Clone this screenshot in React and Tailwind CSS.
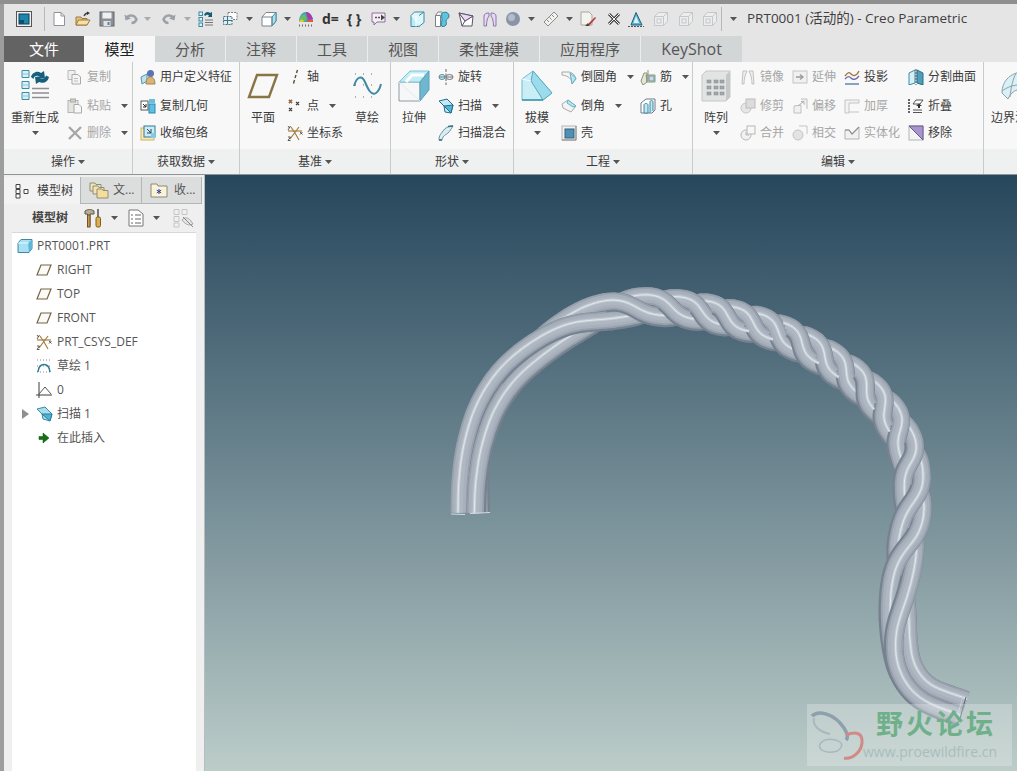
import { useMemo } from 'react';

const FONT = "font-['Open_Sans','Noto_Sans_CJK_SC',sans-serif]";

const S = ({ w = 16, h = 16, className = '', children }) => (
  <svg width={w} height={h} viewBox={`0 0 ${w} ${h}`} fill="none" className={`shrink-0 ${className}`}>
    {children}
  </svg>
);

const Caret = ({ className = '' }) => (
  <svg width="7" height="4" viewBox="0 0 7 4" className={`shrink-0 ${className}`}>
    <path d="M0 0h7L3.5 4z" fill="#555" />
  </svg>
);

/* quick access bar */
const AppIco = (p) => (
  <S {...p}>
    <rect x=".5" y=".5" width="15" height="15" fill="#eef1f3" stroke="#555" />
    <rect x="3" y="3" width="10" height="10" fill="#1c86ad" stroke="#123f55" />
    <rect x="3" y="9" width="5" height="4" fill="#0f4f6b" />
  </S>
);
const NewIco = (p) => (
  <S {...p}>
    <path d="M3 1.500h7l3.500 3.500v9.500H3z" fill="#fff" stroke="#8e9499" />
    <path d="M10 1.500V5h3.500" stroke="#8e9499" />
  </S>
);
const OpenIco = (p) => (
  <S {...p}>
    <path d="M1 14V6h5l1 1.500h5V14z" fill="#e6c27c" stroke="#9a7a3d" />
    <path d="M1 14l2.500-5H15l-3 5z" fill="#f6dfa8" stroke="#9a7a3d" />
    <path d="M9 5c1-2 2-3 4-3" stroke="#444" strokeWidth="1.500" />
    <path d="M12 .5l3 1.500-3 2z" fill="#333" />
  </S>
);
const SaveIco = (p) => (
  <S {...p}>
    <rect x="1" y="1" width="14" height="14" fill="#8c9096" stroke="#63676c" />
    <rect x="3.500" y="1.500" width="9" height="6" fill="#eef0f2" />
    <rect x="4.500" y="10" width="7" height="5" fill="#dfe4e8" />
    <rect x="8.500" y="11" width="2" height="3" fill="#5f7f96" />
  </S>
);
const UndoIco = (p) => (
  <S {...p}>
    <path d="M4 6c3-2.500 8-2 9.500 2.500-1 2.500-3 3.500-5 3.500" stroke="#9ba1a6" strokeWidth="2.400" />
    <path d="M1.500 3.500l1 6 5.500-2z" fill="#9ba1a6" />
  </S>
);
const RedoIco = (p) => (
  <S {...p} className={`-scale-x-100 ${p.className || ''}`}>
    <path d="M4 6c3-2.500 8-2 9.500 2.500-1 2.500-3 3.500-5 3.500" stroke="#9ba1a6" strokeWidth="2.400" />
    <path d="M1.500 3.500l1 6 5.500-2z" fill="#9ba1a6" />
  </S>
);
const RegenSm = (p) => (
  <S {...p}>
    <rect x="1" y="1" width="3.500" height="3.500" fill="#d5f0f7" stroke="#3e8aa3" />
    <rect x="1" y="6.500" width="3.500" height="3.500" fill="#d5f0f7" stroke="#3e8aa3" />
    <rect x="1" y="12" width="3.500" height="3.500" fill="#d5f0f7" stroke="#3e8aa3" />
    <path d="M6 4c1-3 4-4 6-2l2-1v5h-4l1-1.500C10 3.500 8 3.500 7.500 5z" fill="#175a75" />
    <path d="M7 9h8M7 11.500h8M7 14h8" stroke="#777" />
  </S>
);
const WinIco = (p) => (
  <S {...p}>
    <path d="M6 1.500h9v7H6z" fill="#fff" stroke="#7b8186" strokeDasharray="2 1" />
    <path d="M1.500 5.500H10v8H1.500z" fill="#d8f0f6" stroke="#4d6d7a" strokeDasharray="2 1" />
    <path d="M1.500 9.500H10M5.500 5.500v8" stroke="#4d6d7a" />
  </S>
);
const CubeIco = (p) => (
  <S {...p}>
    <path d="M1 6l4-4.500h10V10l-4 5H1z" fill="#fff" stroke="#79858c" />
    <path d="M11 6l4-4.500V10l-4 5z" fill="#a9e2f1" stroke="#3e8aa3" />
    <path d="M1 6h10v9" stroke="#79858c" />
  </S>
);
const ColorIco = (p) => (
  <S {...p}>
    <path d="M1 11c0-6 3-10 7-10s7 4 7 10z" fill="#3e9ad6" />
    <path d="M8 1c3 0 5 2 7 7l-5 1z" fill="#b03aa0" />
    <path d="M2 9c0-3 2-6 5-6l2 5-3 3z" fill="#65c05a" />
    <path d="M1 11c1-3 3-3 5-1l-1 1z" fill="#f1c231" />
    <path d="M9 9l6 0v2H9z" fill="#e3582f" />
    <path d="M1 14.500h14" stroke="#6d6d6d" strokeDasharray="1 2" strokeWidth="2" />
  </S>
);
const BubbleIco = (p) => (
  <S {...p}>
    <path d="M1 2h13v9H6l-3 3v-3H1z" fill="#f5eef7" stroke="#8e6e96" />
    <path d="M4 6.500h2M7 6.500h2" stroke="#555" strokeWidth="1.500" />
    <path d="M10 3.500l4 3-4 3z" fill="#444" />
  </S>
);
const BoxIco = (p) => (
  <S {...p}>
    <path d="M2 4.500h8v11H2z" fill="#b9ecf6" stroke="#3e8aa3" />
    <path d="M2 4.500L5.500 1H15v10.500l-5 4" fill="#dff6fb" stroke="#3e8aa3" />
    <path d="M10 4.500L15 1" stroke="#3e8aa3" />
    <path d="M7 4.500v11" stroke="#fff" />
  </S>
);
const SweepBoxIco = (p) => (
  <S {...p}>
    <path d="M1.500 4.500h5v11h-5zM1.500 4.500L4 1h4" fill="#fff" stroke="#7b8186" />
    <path d="M8 2c4-2 7 0 7 3s-3 3-3 5 1 2 0 4-5 2-5 0 1-3 1-5-1-5 0-7z" fill="#5ec3dc" stroke="#2f7d96" />
  </S>
);
const FoldIco = (p) => (
  <S {...p}>
    <path d="M1 2l14 3-1 10H4z" fill="#fff" stroke="#5b5468" />
    <path d="M1 2l6 8-3 5" stroke="#5b5468" />
    <path d="M7 10l8-5" stroke="#5b5468" />
    <path d="M1 2l6 8 8-5z" fill="#ead9f0" stroke="#5b5468" />
  </S>
);
const MirrorTop = (p) => (
  <S {...p}>
    <path d="M7 2C4 2 2 3 2 5v10h2.500c0-5 1-8 2.500-10zM9 2c3 0 5 1 5 3v10h-2.500c0-5-1-8-2.500-10z" fill="#e6d9f2" stroke="#8b76a8" />
  </S>
);
const SphereIco = (p) => (
  <S {...p}>
    <circle cx="8" cy="8" r="7" fill="#8a94a8" />
    <circle cx="6.500" cy="6.500" r="3.500" fill="#b4bcc9" />
  </S>
);
const RulerIco = (p) => (
  <S {...p}>
    <path d="M1 11L11 1l4 4L5 15z" fill="#f3f1ec" stroke="#8c8c8c" />
    <path d="M4 9l2 2M6.500 6.500l2 2M9 4l2 2" stroke="#8c8c8c" />
  </S>
);
const PageBrushIco = (p) => (
  <S {...p}>
    <path d="M1 1h8l3 3v10H1z" fill="#f3f3ef" stroke="#a8a8a0" />
    <path d="M7 14l8-8 1 1-7 8z" fill="#b83a3a" />
    <path d="M5 15l3-3 1 3z" fill="#444" />
  </S>
);
const XIco = (p) => (
  <S {...p}>
    <path d="M3 3l10 10M13 3L3 13" stroke="#444" strokeWidth="3" />
    <path d="M3 3l10 10M13 3L3 13" stroke="#f4f4f4" strokeWidth="1" />
  </S>
);
const SheetIco = (p) => (
  <S {...p}>
    <path d="M8 1.500L3 14h11z" fill="#5fb4d4" stroke="#1f5f7a" />
    <path d="M8 5l-2.500 7H11z" fill="#dcf2f9" />
    <path d="M0 15.500h16" stroke="#555" strokeDasharray="2 1" />
  </S>
);
const GhostIco = (p) => (
  <S {...p}>
    <path d="M1.500 5.500l4-4h9v9l-4 4h-9z" fill="#eceeee" stroke="#c5c8ca" />
    <path d="M1.500 5.500h9v9M10.500 5.500l4-4" stroke="#c5c8ca" />
    <rect x="4" y="8" width="4" height="4" stroke="#c5c8ca" />
  </S>
);

/* ribbon: operations */
const RegenBig = () => (
  <S w={32} h={34}>
    <path d="M3 1.500h7v7H3zM3 12.500h7v7H3zM3 23.500h7v7H3z" fill="#d5f0f7" stroke="#3e8aa3" />
    <path d="M3 5h7M3 16h7M3 27h7" stroke="#89c8da" />
    <path d="M12 8c1-4 6-7 10-4l3-2 1 7-7 1 2-2.500C18 6 15 7 14.500 10z" fill="#17607d" />
    <path d="M30 8c-1 5-6 7-10 5l-3 2-1-7 7-1-2 2.500c3 1 5.500-.5 6-3z" fill="#17607d" />
    <path d="M13 19.500h17M13 24h17M13 28.500h17" stroke="#8f8f8f" strokeWidth="1.500" />
  </S>
);
const CopyIco = () => (
  <S>
    <path d="M1 1.500h7v9H1z" fill="#efefef" stroke="#b9b9b9" />
    <path d="M5 5.500h6l2.500 2.500v7H5z" fill="#f5f5f5" stroke="#a9a9a9" />
    <path d="M7 9.500h4M7 12h4" stroke="#bcbcbc" />
  </S>
);
const PasteIco = () => (
  <S>
    <rect x="1" y="2.500" width="10" height="12" fill="#e4e4e0" stroke="#b4b4b0" />
    <rect x="3.500" y="1" width="5" height="3" fill="#cfcfcb" stroke="#aaa" />
    <path d="M7 6.500h5l2.500 2.500v6H7z" fill="#f7f7f7" stroke="#a9a9a9" />
  </S>
);
const DeleteIco = () => (
  <S>
    <path d="M2 2l12 12M14 2L2 14" stroke="#a7a7a7" strokeWidth="2.400" />
  </S>
);
const UdfIco = () => (
  <S>
    <path d="M1 8l6-3v7l-5 3z" fill="#b9e5f2" stroke="#5d93a8" />
    <circle cx="10.500" cy="4.500" r="3.500" fill="#5b72b8" />
    <path d="M6 15c0-5 2-7 4.500-7s4.500 2 4.500 7z" fill="#d8b576" stroke="#a5854a" />
  </S>
);
const CopyGeomIco = () => (
  <S>
    <rect x="1" y="3" width="7" height="9" fill="#fff" stroke="#555" />
    <path d="M3 6l3 3M6 6v3H3" stroke="#222" />
    <rect x="9" y="1" width="6" height="4" fill="#64bfe0" />
    <rect x="9" y="6" width="6" height="9" fill="#5bc0e4" stroke="#2f86a8" />
  </S>
);
const WrapIco = () => (
  <S>
    <rect x="1" y="3" width="13" height="12" fill="#fbe9b5" stroke="#d1b25e" />
    <rect x="4" y="1" width="11" height="11" fill="#cfeaf3" stroke="#2e7c9c" />
    <path d="M7 4l4 4M11 4v4H7" stroke="#1a4a60" />
    <rect x="11" y="8" width="4" height="5" fill="#7ecde6" />
  </S>
);

/* ribbon: datums */
const PlaneBig = () => (
  <S w={32} h={26}>
    <path d="M10 2h20l-8 22H2z" stroke="#8a7345" strokeWidth="2.400" />
  </S>
);
const AxisIco = () => (
  <S>
    <path d="M10.500 1l-1 3M9 6L8 9M7.500 11l-1 3.500" stroke="#5f4f2f" strokeWidth="1.400" />
  </S>
);
const PointIco = () => (
  <S>
    <path d="M2 2l3 3M5 2L2 5M9 4l3 3M12 4L9 7M2 10l3 3M5 10l-3 3" stroke="#3c3c3c" strokeWidth="1.200" />
    <path d="M2 2l3 3M5 2L2 5" stroke="#a06a2c" strokeWidth="1.200" />
  </S>
);
const CsysIco = () => (
  <S>
    <path d="M3 14L12 2M4 2l4 6 4 7" stroke="#a77e3c" strokeWidth="1.200" />
    <path d="M1 6h14" stroke="#a77e3c" strokeWidth="1.200" />
    <path d="M13 7l2.500 2.500M15.500 7L13 9.500M1 1l1.500 2M3.500 1L1 5M1 12h2.500L1 15.500h2.500" stroke="#333" strokeWidth=".8" />
  </S>
);
const SketchBig = () => (
  <S w={30} h={30}>
    <path d="M3 3h24M3 14h24M3 26h24" stroke="#666" strokeDasharray="1 7" />
    <path d="M2 15c3-10 8-11 11-4s6 14 11 11c3-2 4-5 5-9" stroke="#3d8ba3" strokeWidth="2" />
  </S>
);

/* ribbon: shapes */
const ExtrudeBig = () => (
  <S w={32} h={32}>
    <path d="M1 12h21v19H1z" fill="#f7f7f7" stroke="#8f9aa0" />
    <path d="M1 12L12 1h19L22 12z" fill="#c3ecf5" stroke="#7fc4d6" />
    <path d="M22 12l9-11v19l-9 11z" fill="#6fb6cf" stroke="#58a2bb" />
    <path d="M8 12L14 5h12" stroke="#fff" strokeWidth="3" />
    <path d="M22 31L1 12" stroke="#dcecf0" />
  </S>
);
const RevolveIco = () => (
  <S>
    <path d="M8 0v16" stroke="#666" strokeDasharray="3 1.500" />
    <ellipse cx="4" cy="8" rx="3" ry="2.500" fill="#d3ecf3" stroke="#4f93aa" />
    <ellipse cx="11.500" cy="8" rx="3.500" ry="2.500" fill="#f2f2f2" stroke="#777" />
    <path d="M1 8h14" stroke="#777" />
  </S>
);
const SweepIco = () => (
  <S>
    <path d="M1 3l8-2 6 6-2 8-6-1-1-6z" fill="#c6e8f2" stroke="#1f6f8c" />
    <path d="M6 8l7 7 2-8z" fill="#55b5d6" stroke="#1f6f8c" />
    <path d="M1 3l5 5" stroke="#1f6f8c" />
  </S>
);
const SweepBlendIco = () => (
  <S>
    <path d="M1 15c0-5 2-6 4-9s5-5 10-5c-2 3-3 5-5 7s-5 2-6 7z" fill="#d8eef5" stroke="#6f8f9c" />
    <path d="M1 15l3 0M10 1.500l5-.5" stroke="#3f6f80" strokeWidth="1.500" />
  </S>
);

/* ribbon: engineering */
const DraftBig = () => (
  <S w={32} h={34}>
    <path d="M1 10l11-8 19 22-9 7H1z" fill="#c9eef6" stroke="#75bcd0" />
    <path d="M12 2l19 22-9 7L10 12z" fill="#9bdcec" stroke="#5ea8bf" />
    <path d="M1 31h21" stroke="#3d93ad" strokeWidth="1.500" />
    <path d="M1 10l9 2" stroke="#fff" />
  </S>
);
const RoundIco = () => (
  <S>
    <path d="M1 3h6c4 0 7 3 8 7l-4 5c0-5-3-8-10-9z" fill="#f5f5f5" stroke="#a8a8a8" />
    <path d="M9 4l6 5-4 6-1-6z" fill="#b8e6f2" stroke="#64b3ca" />
  </S>
);
const ChamferIco = () => (
  <S>
    <path d="M1 6l6-4 8 6-5 6-8-4z" fill="#f3f3f3" stroke="#ababab" />
    <path d="M7 2l8 6-3 1-6-4z" fill="#b8e6f2" stroke="#64b3ca" />
  </S>
);
const ShellIco = () => (
  <S>
    <rect x="1" y="1" width="14" height="14" fill="#f1f1f1" stroke="#b4b4b4" />
    <rect x="4" y="4" width="9" height="9" fill="#4e90b5" stroke="#30617f" />
    <path d="M15 1v14H1" stroke="#888" />
  </S>
);
const RibIco = () => (
  <S>
    <path d="M1 12l3-8 3 0v9l-4 3zM6 6h9v7H7z" fill="#e2e7d7" stroke="#8c9575" />
    <path d="M8 1v11" stroke="#8c9575" />
    <path d="M9 7h5v5H9z" fill="#c9dbe8" stroke="#6f98b0" />
  </S>
);
const HoleIco = () => (
  <S>
    <path d="M1 5l5-4h9v11l-3 3H1z" fill="#fff" stroke="#778" />
    <path d="M4 15V7c0-2 4-2 4 0v8z" fill="#bfe8f3" stroke="#3e8aa3" />
    <path d="M10 15V4c0-2 3-2 3 0v9" fill="#bfe8f3" stroke="#3e8aa3" />
  </S>
);

/* ribbon: editing */
const PatternBig = () => (
  <S w={30} h={32}>
    <path d="M1 5L5 1h24v26l-4 4H1z" fill="#e2e4e4" stroke="#c6c8c8" />
    <path d="M25 5l4-4v26l-4 4z" fill="#c4c8c8" />
    {[8, 15, 21].map((x) =>
      [11, 17, 23].map((y) => <rect key={`${x}-${y}`} x={x - 2} y={y - 1} width="4" height="3" fill="#a4a8aa" stroke="#85898b" strokeWidth=".5" />),
    )}
  </S>
);
const MirrorIco = () => (
  <S>
    <path d="M7 2H3L2 15h2c0-5 1-9 3-13zM9 2h4l1 13h-2c0-5-1-9-3-13z" fill="#efefef" stroke="#c2c2c2" />
  </S>
);
const ExtendIco = () => (
  <S>
    <rect x="1" y="2" width="14" height="12" fill="#f0f0f0" stroke="#c3c3c3" />
    <path d="M4 8h6M8 5.500L11 8l-3 2.500" stroke="#9b9b9b" strokeWidth="1.300" />
  </S>
);
const TrimIco = () => (
  <S>
    <circle cx="6" cy="10" r="5" fill="#e6e6e6" stroke="#c6c6c6" />
    <rect x="6" y="1" width="9" height="9" fill="#dcdcdc" stroke="#bcbcbc" />
  </S>
);
const OffsetIco = () => (
  <S>
    <path d="M2 8l7-1v8H2zM9 1h6v10" stroke="#c0c0c0" fill="#f0f0f0" />
    <path d="M6 8l5-4M9 3.500h3v3" stroke="#b0b0b0" />
  </S>
);
const ThickenIco = () => (
  <S>
    <path d="M1 2h14v3H5v10H1z" fill="#f2f2f2" stroke="#c4c4c4" />
    <path d="M5 14h10" stroke="#c4c4c4" />
  </S>
);
const MergeIco = () => (
  <S>
    <circle cx="6" cy="10" r="5" fill="#f2f2f2" stroke="#b8b8b8" />
    <rect x="7" y="1" width="8" height="8" fill="#f7f7f7" stroke="#b8b8b8" />
    <path d="M6 10V7M6 10h3" stroke="#b8b8b8" />
  </S>
);
const IntersectIco = () => (
  <S>
    <circle cx="6" cy="10" r="5" fill="#e3e3e3" stroke="#c4c4c4" />
    <path d="M7 1h8v8" stroke="#c4c4c4" />
  </S>
);
const SolidifyIco = () => (
  <S>
    <path d="M1 5h4l3 4 7-7v12H1z" fill="#f1f1f1" stroke="#b3b3b3" />
    <path d="M1 5l4 0 3 4 7-7" stroke="#8f8f8f" strokeWidth="1.200" />
  </S>
);
const ProjectIco = () => (
  <S>
    <path d="M1 7c3-4 4-4 6-2s5 3 8-3" stroke="#a5703c" strokeWidth="1.300" />
    <path d="M1 10c3-3 4-3 6-1s5 2 8-2" stroke="#6b6ba8" strokeWidth="1.300" />
    <path d="M1 15h14" stroke="#4a74a8" strokeWidth="1.300" />
  </S>
);
const SplitIco = () => (
  <S>
    <path d="M1 4l6-3v13l-6 2z" fill="#d4f0f6" stroke="#3e8aa3" />
    <path d="M9 1l6 3v12l-6-2z" fill="#4c9fbb" stroke="#2b6c84" />
    <path d="M8 0v16" stroke="#555" strokeDasharray="2 1" />
  </S>
);
const FoldRibIco = () => (
  <S>
    <path d="M1 1v14" stroke="#333" strokeDasharray="2 1" strokeWidth="1.500" />
    <path d="M5 6l3-4h7l-3 4z" fill="#fff" stroke="#555" />
    <path d="M8 8l3-2.500L14 8H12v2h-2V8z" fill="#333" />
    <path d="M5 12h9M5 14.500h9" stroke="#555" />
  </S>
);
const RemoveIco = () => (
  <S>
    <rect x="1" y="1" width="14" height="14" fill="#f4f4f4" stroke="#b4b4b4" />
    <path d="M1 1h14v14z" fill="#a895cf" stroke="#665a8a" />
  </S>
);
const BoundaryBig = () => (
  <S w={30} h={34}>
    <path d="M2 24C2 12 10 2 30 2v20c-8-4-18-2-22 8z" fill="#d8f0f6" stroke="#8aa2a8" />
    <path d="M16 4c-3 6-5 14-6 24M2 22c8-6 18-8 28-4" stroke="#8aa2a8" />
  </S>
);

/* model tree */
const TreeTabIco = () => (
  <S>
    <path d="M2 1.500h4v4H2zM2 11h4v4H2zM2 6.500h4v4H2zM10 6.500h4v4h-4z" fill="#fff" stroke="#444" />
  </S>
);
const FilesIco = () => (
  <S w={20} h={18}>
    <path d="M1 2h5l1 1.500h5V10H1z" fill="#f4e3b4" stroke="#8d8e7a" />
    <path d="M4 5h5l1 1.500h5V13H4z" fill="#f4e3b4" stroke="#8d8e7a" />
    <path d="M8 8h5l1 1.500h5V17H8z" fill="#f7dd9a" stroke="#8d8e7a" />
  </S>
);
const FavIco = () => (
  <S w={18} h={16}>
    <path d="M1 2h6l1 2h9v11H1z" fill="#fbf3d8" stroke="#8a8a78" />
    <path d="M9 7v5M6.800 8.200l4.400 2.600M11.200 8.200l-4.400 2.600" stroke="#2a3f9c" />
  </S>
);
const ToolsIco = ({ className }) => (
  <S w={20} h={20} className={className}>
    <path d="M1 3c3-2 6-2 9 0v3H6v12H3.500V6H1z" fill="#b8ad96" stroke="#5f5542" />
    <rect x="3.500" y="7" width="2.500" height="12" fill="#c89a52" stroke="#6e5328" />
    <path d="M14 1v8" stroke="#777" strokeWidth="2" />
    <rect x="12" y="9" width="4.500" height="10" rx="1.500" fill="#dcb04c" stroke="#7b5f22" />
  </S>
);
const ListIco = ({ className }) => (
  <S w={16} h={18} className={className}>
    <path d="M1 1h9l5 4v12H1z" fill="#fff" stroke="#777" />
    <path d="M3 6h2M3 10h2M3 14h2M7 6h6M7 10h6M7 14h6" stroke="#666" />
  </S>
);
const ViewGhostIco = ({ className }) => (
  <S w={22} h={20} className={className}>
    <path d="M2 1.500h5v5H2zM2 8.500h5v5H2zM2 15h5v4H2zM10 1.500h5v5h-5z" stroke="#c5c5c5" />
    <path d="M10 12c2-3 6-3 9 1l2 3-3 1c-3 0-6-2-8-5z" fill="#e5e5e5" stroke="#a8a8a8" />
    <path d="M11 9l10 10" stroke="#888" />
  </S>
);
const PartIco = () => (
  <S>
    <path d="M1 5l3-3.500h11v9l-3 4H1z" fill="#a6e0f2" stroke="#3e8aa3" />
    <path d="M11 5l4-3.500v9l-3 4z" fill="#5fb6d6" />
    <path d="M1 5h10.500" stroke="#e8fafe" />
  </S>
);
const PlaneSm = () => (
  <S>
    <path d="M5 3h10l-4 10H1z" stroke="#746445" strokeWidth="1.200" fill="#fbfaf6" />
  </S>
);
const SketchSm = () => (
  <S>
    <path d="M1 2h14M1 8h14M1 14h14" stroke="#8a8a8a" strokeDasharray="1 2" />
    <path d="M2 14c1-10 11-10 12 0" stroke="#2f7d96" strokeWidth="1.600" />
  </S>
);
const AnalysisIco = () => (
  <S>
    <path d="M3 0v16M0 13h16" stroke="#3c3c3c" />
    <path d="M3 12l6-7 6 7" stroke="#555" />
  </S>
);
const SweepTree = () => (
  <S w={17} h={16}>
    <path d="M1 3l8-2 7 7-2 7-7-2-1-5z" fill="#a8ddee" stroke="#3e8aa3" />
    <path d="M6 8l8 7 2-7z" fill="#4fb2d4" stroke="#2f7d96" />
  </S>
);
const InsertIco = () => (
  <S w={12} h={12}>
    <path d="M1 4.500h4V1l6 5-6 5V7.500H1z" fill="#127312" stroke="#0b4f0b" strokeWidth=".5" />
  </S>
);

const Tool = ({ icon, label, off, caret }) => (
  <div className={`flex items-center gap-[4px] whitespace-nowrap ${off ? 'text-[#a6a6a6]' : 'text-[#3c3c3c]'}`}>
    {icon}
    <span>{label}</span>
    {caret && <Caret className="ml-[6px]" />}
  </div>
);

const Col = ({ className = '', children }) => (
  <div className={`grid grid-rows-[30px_28px_25px] items-center ${className}`}>{children}</div>
);

const Big = ({ icon, label, caret, className = '' }) => (
  <div className={`flex flex-col items-center pt-[5px] text-[#3c3c3c] ${className}`}>
    <div className="flex h-[38px] items-center justify-center">{icon}</div>
    <div className="mt-[5px] whitespace-nowrap leading-[16px]">{label}</div>
    {caret && <Caret className="mt-[5px]" />}
  </div>
);

const Group = ({ label, className = '', children }) => (
  <div className={`flex shrink-0 flex-col border-r border-[#c8cbcc] ${className}`}>
    <div className="flex h-[87px]">{children}</div>
    <div className="flex h-[25px] items-center justify-center gap-[3px] bg-[#eff0f0] text-[#3c3c3c]">
      {label}
      {label && <Caret />}
    </div>
  </div>
);

const TreeRow = ({ icon, label, arrow, root }) => (
  <div className={`flex h-[24px] items-center whitespace-nowrap ${root ? 'pl-[5px]' : 'pl-[24px]'}`}>
    <span className="flex w-[16px] justify-center">{icon}</span>
    <span className={root ? 'ml-[4px]' : 'ml-[5px]'}>{label}</span>
    {arrow}
  </div>
);

/* rope: three strands wound round a bent centre line */
const SPINE = [
  [470, 513], [471, 480], [476, 445], [487, 410], [505, 380], [530, 355], [565, 330], [600, 314], [640, 307],
  [680, 309], [720, 316], [770, 330], [815, 352], [855, 380], [885, 410], [905, 445], [911, 473], [912, 510],
  [905, 550], [899, 593], [898, 640], [905, 672], [925, 695], [963, 710],
];
const RATE = [
  [0, 0.002], [140, 0.006], [218, 0.014], [296, 0.05], [376, 0.08], [570, 0.08], [640, 0.055], [715, 0.04],
  [790, 0.02], [830, 0.003], [2000, 0],
];
const SPREAD = [0, 0, 4];

function rateAt(s) {
  for (let i = 1; i < RATE.length; i++) {
    if (s <= RATE[i][0]) {
      const [a, ra] = RATE[i - 1];
      const [b, rb] = RATE[i];
      return ra + ((rb - ra) * (s - a)) / (b - a);
    }
  }
  return 0;
}

function sampleSpine() {
  const out = [];
  for (let i = 0; i < SPINE.length - 1; i++) {
    const p0 = SPINE[Math.max(i - 1, 0)];
    const p1 = SPINE[i];
    const p2 = SPINE[i + 1];
    const p3 = SPINE[Math.min(i + 2, SPINE.length - 1)];
    for (let k = 0; k < 16; k++) {
      const t = k / 16;
      const f = (a, b, c, d) =>
        0.5 * (2 * b + (c - a) * t + (2 * a - 5 * b + 4 * c - d) * t * t + (3 * b - a - 3 * c + d) * t * t * t);
      out.push([f(p0[0], p1[0], p2[0], p3[0]), f(p0[1], p1[1], p2[1], p3[1])]);
    }
  }
  out.push(SPINE[SPINE.length - 1]);
  return out;
}

const pts2str = (list, shift) =>
  list.map((q) => `${(q.x - q.nx * shift).toFixed(1)},${(q.y - q.ny * shift).toFixed(1)}`).join(' ');

// a sine squashed at its peaks: strands rest along the edges, so the rope's outline stays even
const wave = (ph) => 12.5 * Math.tanh(1.1 * Math.sin(ph));

function buildRope() {
  const pts = sampleSpine();
  let s = 0;
  let phase = -Math.PI / 2;
  const samples = pts.map((p, i) => {
    const a = pts[Math.max(i - 1, 0)];
    const b = pts[Math.min(i + 1, pts.length - 1)];
    const len = Math.hypot(b[0] - a[0], b[1] - a[1]) || 1;
    if (i > 0) {
      const d = Math.hypot(p[0] - pts[i - 1][0], p[1] - pts[i - 1][1]);
      s += d;
      phase += rateAt(s) * d;
    }
    return { p, s, nx: -(b[1] - a[1]) / len, ny: (b[0] - a[0]) / len, phase };
  });
  const runs = [[], [], []];
  [0, 1, 2].forEach((strand) => {
    const line = samples.map((q) => {
      const ph = q.phase + (strand * 2 * Math.PI) / 3;
      // third strand sits further out where the rope is still almost untwisted
      const off = wave(ph) + SPREAD[strand] * Math.max(0, 1 - q.s / 200);
      return { x: q.p[0] + q.nx * off, y: q.p[1] + q.ny * off, nx: q.nx, ny: q.ny };
    });
    const rankAt = (q) => {
      const depth = Math.cos(q.phase + (strand * 2 * Math.PI) / 3);
      return [1, 2].filter((o) => Math.cos(q.phase + (((strand + o) % 3) * 2 * Math.PI) / 3) < depth).length;
    };
    let from = 0;
    let rank = rankAt(samples[0]);
    for (let i = 1; i <= samples.length; i++) {
      const next = i < samples.length ? rankAt(samples[i]) : -1;
      if (next !== rank) {
        runs[rank].push({ line, from, to: i - 1 });
        from = i;
        rank = next;
      }
    }
  });
  // each layer runs a sample further than the one under it, so the joins between runs don't show
  return runs.flat().map(({ line, from, to }) => {
    const part = (m) => line.slice(Math.max(from - m, 0), Math.min(to + m, line.length - 1) + 1);
    return {
      base: pts2str(part(1), 0),
      a: pts2str(part(2), 1),
      b: pts2str(part(3), 1),
      c: pts2str(part(4), 2),
    };
  });
}

const Rope = () => {
  const runs = useMemo(buildRope, []);
  return (
    <svg viewBox="205 175 812 596" className="absolute inset-0 h-full w-full" fill="none" strokeLinejoin="round">
      {runs.map((r, i) => (
        <g key={i}>
          <polyline points={r.base} stroke="#778290" strokeWidth="19.500" />
          <polyline points={r.a} stroke="#97a1ad" strokeWidth="17" />
          <polyline points={r.a} stroke="#a7b0bb" strokeWidth="13.500" />
          <polyline points={r.b} stroke="#afb8c2" strokeWidth="8" />
          <polyline points={r.c} stroke="#c4ccd4" strokeWidth="3" />
          <polyline points={r.c} stroke="#e4e9ee" strokeWidth="1" />
        </g>
      ))}
      <path d="M451 514l14 .5M470 513.500l20-1" stroke="#d6dce2" />
      <path d="M966 697l-7 25" stroke="#59626c" />
      <path d="M963 696l-7 25" stroke="#c5ccd3" />
    </svg>
  );
};

const Watermark = () => (
  <div className="absolute left-[602px] top-[529px] flex h-[62px] w-[205px] flex-col bg-[#eef3f1]/30 pt-[3px]">
    <svg width="58" height="56" viewBox="0 0 58 56" fill="none" className="absolute left-[1px] top-[4px]">
      <path d="M4 8c6-6 22-3 32 12 4 6 4 10 2 12" stroke="#8da0ab" strokeWidth="3.500" />
      <path d="M6 10c-2 8 6 14 16 16" stroke="#a9b8bf" strokeWidth="2" />
      <path d="M38 27c10-4 17-2 16 8-1 9-10 17-18 15" stroke="#d18a87" strokeWidth="3" />
      <path d="M12 36c4-6 14-6 20-2 4 3 0 10-8 10-8 1-14-3-12-8z" stroke="#a9b8bf" strokeWidth="1.500" />
    </svg>
    <span className="ml-[69px] text-[27px] font-bold leading-[34px] tracking-[3px] text-[#6fb08b]">野火论坛</span>
    <span className="ml-[56px] whitespace-nowrap text-[14px] leading-[22px] text-[#a9bdbd]">www.proewildfire.cn</span>
  </div>
);

export default function App() {
  return (
    <div className={`flex h-[771px] w-[1017px] flex-col overflow-hidden bg-[#e5e5e5] text-[12px] ${FONT}`}>
      <div className="h-[4px] shrink-0 bg-[#8f8f8f]" />
      <div className="flex min-h-0 flex-1 flex-col border-l-[4px] border-[#9d9d9d]">
        {/* quick access toolbar and title */}
        <div className="flex h-[32px] shrink-0 items-center pb-[3px] pl-[12px]">
          <AppIco />
          <div className="ml-[12px] h-[24px] w-px bg-[#b8b8b8]" />
          <NewIco className="ml-[6px]" />
          <OpenIco className="ml-[8px]" />
          <SaveIco className="ml-[8px]" />
          <UndoIco className="ml-[8px]" />
          <Caret className="ml-[5px] opacity-40" />
          <RedoIco className="ml-[10px]" />
          <Caret className="ml-[7px] opacity-40" />
          <RegenSm className="ml-[7px]" />
          <WinIco className="ml-[8px]" />
          <Caret className="ml-[8px]" />
          <CubeIco className="ml-[8px]" />
          <Caret className="ml-[7px]" />
          <ColorIco className="ml-[7px]" />
          <span className="ml-[8px] w-[16px] text-[14px] font-bold leading-none text-[#333]">d=</span>
          <span className="ml-[8px] w-[16px] text-center text-[14px] font-bold leading-none text-[#333]">{'{ }'}</span>
          <BubbleIco className="ml-[9px]" />
          <Caret className="ml-[6px]" />
          <BoxIco className="ml-[9px]" />
          <SweepBoxIco className="ml-[9px]" />
          <FoldIco className="ml-[8px]" />
          <MirrorTop className="ml-[8px]" />
          <SphereIco className="ml-[7px]" />
          <Caret className="ml-[7px]" />
          <RulerIco className="ml-[8px]" />
          <Caret className="ml-[7px]" />
          <PageBrushIco className="ml-[7px]" />
          <XIco className="ml-[10px]" />
          <SheetIco className="ml-[6px]" />
          <GhostIco className="ml-[9px]" />
          <GhostIco className="ml-[9px]" />
          <GhostIco className="ml-[8px]" />
          <div className="ml-[3px] h-[24px] w-px bg-[#b8b8b8]" />
          <Caret className="ml-[8px]" />
          <span className="ml-[10px] whitespace-nowrap text-[13.5px] text-[#3f3f3f]">PRT0001 (活动的) - Creo Parametric</span>
        </div>

        {/* tabs */}
        <div className="flex h-[26px] shrink-0 items-stretch text-[15px] text-[#555]">
          <div className="flex w-[80px] items-center justify-center bg-[#636363] text-white">文件</div>
          <div className="flex w-[71px] items-center justify-center bg-[#f7f7f7] text-[#222]">模型</div>
          <div className="flex w-[71px] items-center justify-center border-r border-[#eceded] bg-[#d3d6d7]">分析</div>
          <div className="flex w-[71px] items-center justify-center border-r border-[#eceded] bg-[#d3d6d7]">注释</div>
          <div className="flex w-[71px] items-center justify-center border-r border-[#eceded] bg-[#d3d6d7]">工具</div>
          <div className="flex w-[71px] items-center justify-center border-r border-[#eceded] bg-[#d3d6d7]">视图</div>
          <div className="flex w-[101px] items-center justify-center border-r border-[#eceded] bg-[#d3d6d7]">柔性建模</div>
          <div className="flex w-[101px] items-center justify-center border-r border-[#eceded] bg-[#d3d6d7]">应用程序</div>
          <div className="flex w-[101px] items-center justify-center bg-[#d3d6d7] text-[16px]">KeyShot</div>
        </div>

        {/* ribbon */}
        <div className="flex h-[113px] shrink-0 border-b border-[#8e9599] bg-[#f8f8f8]">
          <Group label="操作" className="w-[129px]">
            <Big className="ml-[7px] w-[48px]" icon={<RegenBig />} label="重新生成" caret />
            <Col className="ml-[8px]">
              <Tool off icon={<CopyIco />} label="复制" />
              <Tool off icon={<PasteIco />} label="粘贴" caret />
              <Tool off icon={<DeleteIco />} label="删除" caret />
            </Col>
          </Group>
          <Group label="获取数据" className="w-[107px]">
            <Col className="ml-[7px]">
              <Tool icon={<UdfIco />} label="用户定义特征" />
              <Tool icon={<CopyGeomIco />} label="复制几何" />
              <Tool icon={<WrapIco />} label="收缩包络" />
            </Col>
          </Group>
          <Group label="基准" className="w-[151px]">
            <Big className="ml-[7px] w-[32px]" icon={<PlaneBig />} label="平面" />
            <Col className="ml-[8px] w-[64px]">
              <Tool icon={<AxisIco />} label="轴" />
              <Tool icon={<PointIco />} label="点" caret />
              <Tool icon={<CsysIco />} label="坐标系" />
            </Col>
            <Big className="w-[32px]" icon={<SketchBig />} label="草绘" />
          </Group>
          <Group label="形状" className="w-[123px]">
            <Big className="ml-[5px] w-[36px]" icon={<ExtrudeBig />} label="拉伸" />
            <Col className="ml-[6px]">
              <Tool icon={<RevolveIco />} label="旋转" />
              <Tool icon={<SweepIco />} label="扫描" caret />
              <Tool icon={<SweepBlendIco />} label="扫描混合" />
            </Col>
          </Group>
          <Group label="工程" className="w-[179px]">
            <Big className="ml-[5px] w-[36px]" icon={<DraftBig />} label="拔模" caret />
            <Col className="ml-[6px] w-[79px]">
              <Tool icon={<RoundIco />} label="倒圆角" caret />
              <Tool icon={<ChamferIco />} label="倒角" caret />
              <Tool icon={<ShellIco />} label="壳" />
            </Col>
            <Col>
              <Tool icon={<RibIco />} label="筋" caret />
              <Tool icon={<HoleIco />} label="孔" />
              <div />
            </Col>
          </Group>
          <Group label="编辑" className="w-[291px]">
            <Big className="ml-[5px] w-[36px]" icon={<PatternBig />} label="阵列" caret />
            <Col className="ml-[6px] w-[52px]">
              <Tool off icon={<MirrorIco />} label="镜像" />
              <Tool off icon={<TrimIco />} label="修剪" />
              <Tool off icon={<MergeIco />} label="合并" />
            </Col>
            <Col className="w-[52px]">
              <Tool off icon={<ExtendIco />} label="延伸" />
              <Tool off icon={<OffsetIco />} label="偏移" />
              <Tool off icon={<IntersectIco />} label="相交" />
            </Col>
            <Col className="w-[64px]">
              <Tool icon={<ProjectIco />} label="投影" />
              <Tool off icon={<ThickenIco />} label="加厚" />
              <Tool off icon={<SolidifyIco />} label="实体化" />
            </Col>
            <Col>
              <Tool icon={<SplitIco />} label="分割曲面" />
              <Tool icon={<FoldRibIco />} label="折叠" />
              <Tool icon={<RemoveIco />} label="移除" />
            </Col>
          </Group>
          <Group label="" className="min-w-0 flex-1 border-r-0">
            <Big className="ml-[7px] w-[48px] !items-start" icon={<span className="ml-[9px]"><BoundaryBig /></span>} label="边界混合" />
          </Group>
        </div>

        {/* main area */}
        <div className="flex min-h-0 flex-1">
          <div className="flex w-[201px] shrink-0 flex-col border-r border-[#b9bcbe] bg-[#efefef]">
            <div className="mt-[2px] flex h-[27px] shrink-0 text-[#555]">
              <div className="flex w-[76px] items-center gap-[7px] bg-[#f3f3f3] pl-[10px] text-[#3c3c3c]">
                <TreeTabIco />
                模型树
              </div>
              <div className="flex w-[61px] items-center gap-[4px] border-b border-l border-[#b3b6b8] bg-[#dcdddd] pl-[8px]">
                <FilesIco />
                文...
              </div>
              <div className="flex w-[61px] items-center gap-[6px] border-x border-b border-[#b3b6b8] bg-[#dcdddd] pl-[8px]">
                <FavIco />
                收...
              </div>
            </div>
            <div className="flex h-[28px] shrink-0 items-center pl-[28px]">
              <span className="font-bold text-[#444]">模型树</span>
              <ToolsIco className="ml-[16px]" />
              <Caret className="ml-[7px]" />
              <ListIco className="ml-[10px]" />
              <Caret className="ml-[9px]" />
              <ViewGhostIco className="ml-[12px]" />
            </div>
            <div className="mx-[8px] min-h-0 flex-1 border-t border-[#d8d8d8] bg-white pt-[1px] text-[#555]">
              <TreeRow root icon={<PartIco />} label="PRT0001.PRT" />
              <TreeRow icon={<PlaneSm />} label="RIGHT" />
              <TreeRow icon={<PlaneSm />} label="TOP" />
              <TreeRow icon={<PlaneSm />} label="FRONT" />
              <TreeRow icon={<CsysIco />} label="PRT_CSYS_DEF" />
              <TreeRow icon={<SketchSm />} label="草绘 1" />
              <TreeRow icon={<AnalysisIco />} label="0" />
              <div className="relative">
                <span className="absolute left-[10px] top-[7px] h-0 w-0 border-y-[5px] border-l-[7px] border-y-transparent border-l-[#8f8f8f]" />
                <TreeRow icon={<SweepTree />} label="扫描 1" />
              </div>
              <TreeRow icon={<InsertIco />} label="在此插入" />
            </div>
          </div>
          <div className="relative min-w-0 flex-1 bg-gradient-to-b from-[#27475c] to-[#bccdc9]">
            <Rope />
            <Watermark />
          </div>
        </div>
      </div>
    </div>
  );
}
